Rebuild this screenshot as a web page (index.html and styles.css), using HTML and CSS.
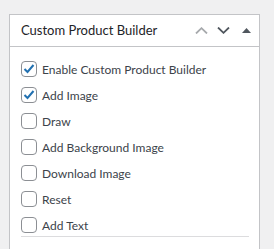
FILE: index.html
```html
<!DOCTYPE html>
<html lang="en">
<head>
    <meta charset="UTF-8">
    <meta name="viewport" content="width=device-width, initial-scale=1.0">
    <title>Custom Product Builder</title>
    <link rel="stylesheet" href="styles.css">
</head>
<body>
    <!-- Caja de opciones -->
    <div class="postbox">
        <div class="postbox-header">
            <h2>Custom Product Builder</h2>
            <div class="handle-actions">
                <button class="handle-btn disabled" aria-label="Move up">
                    <svg width="13" height="7" viewBox="0 0 13 7"><polyline points="1,6.5 6.5,1.2 12,6.5" fill="none" stroke="currentColor" stroke-width="1.8"/></svg>
                </button>
                <button class="handle-btn" aria-label="Move down">
                    <svg width="13" height="7" viewBox="0 0 13 7"><polyline points="1,0.5 6.5,5.8 12,0.5" fill="none" stroke="currentColor" stroke-width="1.8"/></svg>
                </button>
                <button class="handle-btn toggle" aria-label="Toggle panel">
                    <svg width="9" height="5" viewBox="0 0 9 5"><polygon points="0,5 4.5,0 9,5" fill="currentColor"/></svg>
                </button>
            </div>
        </div>

        <div class="inside">
            <label class="option"><span class="check checked"></span>Enable Custom Product Builder</label>
            <label class="option"><span class="check checked"></span>Add Image</label>
            <label class="option"><span class="check"></span>Draw</label>
            <label class="option"><span class="check"></span>Add Background Image</label>
            <label class="option"><span class="check"></span>Download Image</label>
            <label class="option"><span class="check"></span>Reset</label>
            <label class="option"><span class="check"></span>Add Text</label>
            <hr class="separator">
        </div>
    </div>
</body>
</html>
```

FILE: styles.css
```css
html, body {
    height: 100%;
}

body {
    box-sizing: border-box;
    margin: 0;
    padding: 14px 14px 0 9px;
    overflow: hidden;
    background-color: #f0f0f1;
    font-family: Lato, "Open Sans", sans-serif;
    color: #1d2327;
}

/* Caja (sigue por debajo del borde inferior) */
.postbox {
    width: 249px;
    height: 234px;
    border: 1px solid #c3c4c7;
    border-bottom: 0;
    background-color: #fff;
}

.postbox-header {
    display: flex;
    align-items: center;
    justify-content: space-between;
    height: 31px;
    border-bottom: 1px solid #c3c4c7;
}

.postbox-header h2 {
    margin: 0;
    padding-left: 11px;
    font-size: 13px;
    font-weight: 400;
    line-height: 1.4;
}

.handle-actions {
    display: flex;
    align-items: center;
    padding-right: 1px;
}

.handle-btn {
    display: flex;
    align-items: center;
    justify-content: center;
    width: 22px;
    height: 22px;
    padding: 0;
    border: none;
    background: none;
    color: #50575e;
}

.handle-btn.disabled {
    color: #a7aaad;
}

.handle-btn.toggle {
    width: 24px;
}

/* Opciones */
.inside {
    padding: 14px 10px 0 11px;
    display: flex;
    flex-direction: column;
    gap: 10px;
}

.option {
    display: flex;
    align-items: center;
    height: 16px;
    font-size: 12px;
    color: #3c434a;
}

.check {
    box-sizing: border-box;
    width: 16px;
    height: 16px;
    margin-right: 5px;
    border: 1px solid #8c8f94;
    border-radius: 4px;
    background-color: #fff;
    flex-shrink: 0;
}

.check.checked {
    background-image: url("data:image/svg+xml;utf8,<svg xmlns='http://www.w3.org/2000/svg' viewBox='0 0 16 16'><polyline points='3.5,8 6.5,11 12.5,4' fill='none' stroke='%232271b1' stroke-width='2'/></svg>");
    background-size: 16px 16px;
    background-position: -1px -1px;
}

.separator {
    margin: -7px 0 0;
    border: none;
    border-top: 1px solid #dcdcde;
}
```
